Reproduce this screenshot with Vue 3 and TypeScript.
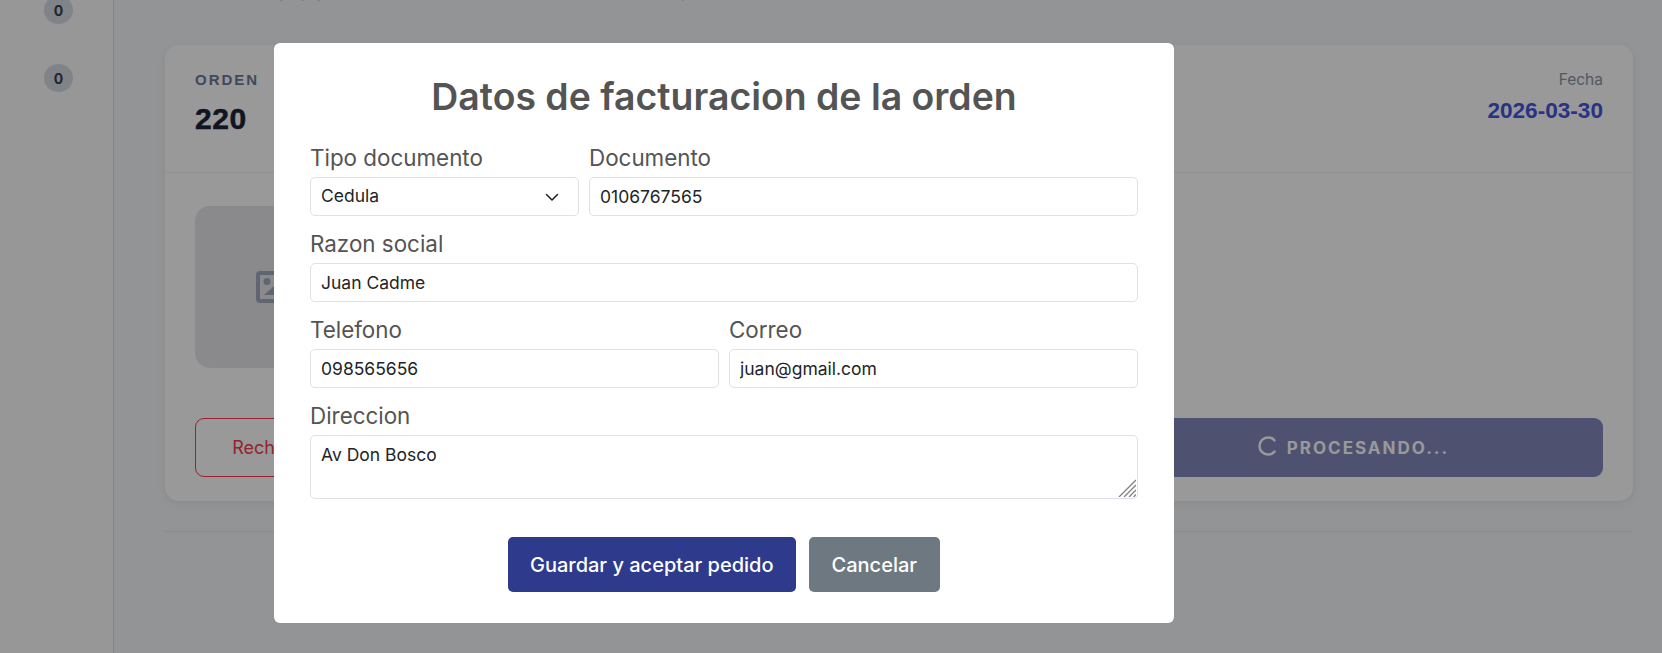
<script setup lang="ts">
const badges: number[] = [0, 0]
</script>

<template>
  <div class="page">
    <aside class="side">
      <span v-for="(b, i) in badges" :key="i" class="badge">{{ b }}</span>
    </aside>
    <main class="content">
      <p class="intro">Pedidos, su pago y gestión de cada orden recibida en la sucursal hoy</p>
      <section class="card">
        <header class="card-head">
          <div>
            <div class="ord-label">ORDEN</div>
            <div class="ord-num">220</div>
          </div>
          <div class="date-box">
            <div class="date-label">Fecha</div>
            <div class="date-val">2026-03-30</div>
          </div>
        </header>
        <div class="card-body">
          <div class="thumb">
            <svg class="thumb-icon" viewBox="0 0 32 32">
              <rect x="2" y="2" width="28" height="28" rx="2" fill="none" stroke="currentColor" stroke-width="4" />
              <circle cx="11" cy="10.5" r="3.5" fill="currentColor" />
              <path d="M8 24 L18 15 L28 24 Z" fill="currentColor" />
            </svg>
          </div>
        </div>
        <div class="card-actions">
          <button class="reject">Rechazar</button>
          <button class="process">
            <svg class="spin" viewBox="0 0 24 24" fill="none" stroke="currentColor" stroke-width="3" stroke-linecap="round">
              <path d="M21 5.2A10.3 10.3 0 1 0 21 18.8" />
            </svg>
            PROCESANDO...
          </button>
        </div>
      </section>
      <hr class="rule" />
    </main>

    <div class="overlay">
      <form class="modal" @submit.prevent>
        <h2 class="title">Datos de facturacion de la orden</h2>
        <div class="row row-doc">
          <label class="field">
            <span class="lab">Tipo documento</span>
            <span class="select">
              Cedula
              <svg class="chev" viewBox="0 0 16 16" fill="none" stroke="currentColor" stroke-width="1.6" stroke-linecap="round" stroke-linejoin="round">
                <path d="M2.5 5.5 8 11l5.5-5.5" />
              </svg>
            </span>
          </label>
          <label class="field">
            <span class="lab">Documento</span>
            <input class="inp" value="0106767565" />
          </label>
        </div>
        <div class="row row-one">
          <label class="field">
            <span class="lab">Razon social</span>
            <input class="inp" value="Juan Cadme" />
          </label>
        </div>
        <div class="row row-two">
          <label class="field">
            <span class="lab">Telefono</span>
            <input class="inp" value="098565656" />
          </label>
          <label class="field">
            <span class="lab">Correo</span>
            <input class="inp" value="juan@gmail.com" />
          </label>
        </div>
        <div class="row row-one">
          <label class="field">
            <span class="lab">Direccion</span>
            <span class="area-wrap">
              <textarea class="inp area">Av Don Bosco</textarea>
              <svg class="grip" viewBox="0 0 18 18" stroke="#808080" stroke-width="1.3" fill="none">
                <path d="M1 18 18 1M6 18 18 6M11 18 18 11M15.5 18 18 15.5" />
              </svg>
            </span>
          </label>
        </div>
        <div class="btns">
          <button class="btn primary">Guardar y aceptar pedido</button>
          <button class="btn gray">Cancelar</button>
        </div>
      </form>
    </div>
  </div>
</template>

<style>
html, body { margin: 0; overflow: hidden; }
</style>

<style scoped>
.page {
  position: relative;
  width: 1662px;
  height: 653px;
  display: flex;
  overflow: hidden;
  font-family: Inter, "Liberation Sans", sans-serif;
  background: #f5f7fa;
}
.side {
  width: 114px;
  flex: none;
  box-sizing: border-box;
  border-right: 1px solid #d5dae2;
  background: #fcfcfc;
  display: flex;
  flex-direction: column;
  align-items: center;
  gap: 40px;
  margin-top: -4px;
  padding-left: 4px;
}
.badge {
  width: 29px;
  height: 28px;
  border-radius: 50%;
  background: #d6dbe3;
  color: #374151;
  font-size: 14px;
  font-weight: 700;
  display: flex;
  align-items: center;
  justify-content: center;
}
.content {
  flex: 1;
  padding: 0 29px 0 51px;
  min-width: 0;
}
.intro {
  margin: -19px 0 0;
  height: 64px;
  font-size: 16px;
  line-height: 20px;
  color: #4b5563;
  white-space: nowrap;
}
.card {
  height: 456px;
  border-radius: 14px;
  background: #fff;
  box-shadow: 0 2px 8px rgba(0, 0, 0, .08);
  display: flex;
  flex-direction: column;
}
.card-head {
  height: 128px;
  box-sizing: border-box;
  padding: 26px 30px 0;
  border-bottom: 1px solid #f1f1f1;
  display: flex;
  justify-content: space-between;
}
.ord-label {
  font: 700 15px/18px "Liberation Sans", sans-serif;
  letter-spacing: 2px;
  color: #6b7a99;
}
.ord-num {
  margin-top: 12px;
  font: 700 30px/36px "Liberation Sans", sans-serif;
  letter-spacing: .6px;
  -webkit-text-stroke: .5px #1b2638;
  color: #1b2638;
}
.date-box { text-align: right; margin-top: -1px; }
.date-label { font-size: 15.5px; line-height: 19px; color: #8a94a6; }
.date-val {
  margin-top: 9px;
  font: 700 22.6px/26px "Liberation Sans", sans-serif;
  color: #4355dd;
}
.card-body {
  flex: 1;
  padding: 33px 30px 0;
}
.thumb {
  width: 154px;
  height: 162px;
  border-radius: 15px;
  background: #e6e7e9;
  display: flex;
  align-items: center;
  justify-content: center;
}
.thumb-icon { width: 32px; height: 32px; color: #a0a9c0; }
.card-actions {
  height: 83px;
  padding: 0 30px;
  display: flex;
  justify-content: space-between;
}
.reject {
  width: 154px;
  height: 59px;
  border: 1px solid #f53b4a;
  border-radius: 9px;
  background: #fff;
  color: #f53b4a;
  font: 400 18px Inter, sans-serif;
}
.process {
  width: 500px;
  height: 59px;
  border: 0;
  border-radius: 9px;
  background: #8289bb;
  color: #fff;
  font: 700 17px Inter, sans-serif;
  letter-spacing: 2px;
  display: flex;
  align-items: center;
  justify-content: center;
  gap: 10px;
}
.spin { width: 20px; height: 22px; margin-top: -3px; }
.rule {
  margin: 30px 0 0;
  border: 0;
  border-top: 1px solid #e5e7eb;
}
.overlay {
  position: absolute;
  inset: 0;
  background: rgba(0, 0, 0, .4);
  display: flex;
  justify-content: flex-start;
  align-items: flex-start;
  padding: 43px 0 0 274px;
}
.modal {
  width: 900px;
  height: 580px;
  box-sizing: border-box;
  padding: 32px 36px 0;
  background: #fff;
  border-radius: 6px;
}
.title {
  margin: 0 0 25px;
  text-align: center;
  font-size: 37.4px;
  line-height: 44px;
  font-weight: 600;
  color: #545454;
}
.row { display: grid; gap: 10px; margin-bottom: 14px; }
.row-doc { grid-template-columns: 269px 1fr; }
.row-one { grid-template-columns: 1fr; }
.row-two { grid-template-columns: 1fr 1fr; }
.field { display: flex; flex-direction: column; min-width: 0; }
.lab {
  font-size: 22.4px;
  line-height: 27px;
  margin-bottom: 6px;
  color: #545454;
}
.inp, .select {
  box-sizing: border-box;
  height: 39px;
  width: 100%;
  padding: 0 10px;
  border: 1px solid #dfe1e8;
  border-radius: 5px;
  background: #fff;
  color: #212529;
  font: 400 17.5px/1.5 Inter, sans-serif;
  outline: none;
}
.select {
  display: flex;
  align-items: center;
  justify-content: space-between;
}
.chev { width: 16px; height: 16px; margin-right: 8px; color: #212529; }
.area-wrap { position: relative; display: block; }
.area {
  display: block;
  height: 64px;
  padding: 6px 10px;
  resize: none;
}
.grip {
  position: absolute;
  right: 2px;
  bottom: 2px;
  width: 18px;
  height: 18px;
  pointer-events: none;
}
.btns {
  display: flex;
  justify-content: center;
  gap: 13px;
  margin-top: 38px;
}
.btn {
  height: 55px;
  padding: 0 22px;
  border: 0;
  border-radius: 5px;
  color: #fff;
  font: 500 20px Inter, sans-serif;
}
.primary { background: #2e3a8c; }
.gray { background: #6e7881; padding: 0 23px; }
</style>
